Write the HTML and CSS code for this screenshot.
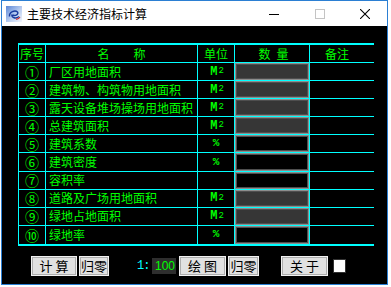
FILE: index.html
```html
<!DOCTYPE html>
<html lang="zh">
<head>
<meta charset="utf-8">
<title>主要技术经济指标计算</title>
<link rel="stylesheet" href="styles.css">
</head>
<body>
<div class="window">
  <div class="titlebar">
    <svg class="app-icon" viewBox="0 0 16 16" width="16" height="16">
      <defs>
        <linearGradient id="ig" x1="0" y1="0" x2="1" y2="1">
          <stop offset="0" stop-color="#5b86d6"/>
          <stop offset="0.55" stop-color="#b9cdf0"/>
          <stop offset="1" stop-color="#f4f7fd"/>
        </linearGradient>
      </defs>
      <rect x="0" y="0" width="16" height="16" fill="url(#ig)"/>
      <path d="M3.5 10.5 C3 6, 9 3.5, 11.5 6 C13 8, 9.5 10.5, 6.5 9 M6 8.5 C 5 12, 10 13, 13 10.5" fill="none" stroke="#1a3a9e" stroke-width="1.4"/>
      <path d="M10 13 C11.5 13.5, 13 12.5, 14 11" fill="none" stroke="#d02020" stroke-width="1.2"/>
    </svg>
    <span class="title">主要技术经济指标计算</span>
    <div class="controls">
      <div class="ctl"><svg width="10" height="10" viewBox="0 0 10 10"><path d="M0 5.5 H10" stroke="#000" stroke-width="1"/></svg></div>
      <div class="ctl"><svg width="10" height="10" viewBox="0 0 10 10"><rect x="0.5" y="0.5" width="9" height="9" fill="none" stroke="#c4c4c4" stroke-width="1"/></svg></div>
      <div class="ctl close"><svg width="10" height="10" viewBox="0 0 10 10"><path d="M0 0 L10 10 M10 0 L0 10" stroke="#000" stroke-width="1.1"/></svg></div>
    </div>
  </div>
  <div class="client">
    <div class="table">
      <div class="row head">
        <div class="cell c-center">序号</div>
        <div class="cell c-name-h"><span>名</span><span>称</span></div>
        <div class="cell c-center">单位</div>
        <div class="cell c-qty-h">数量</div>
        <div class="cell c-note-h">备注</div>
      </div>
      <div class="row">
        <div class="cell c-no">①</div>
        <div class="cell c-name">厂区用地面积</div>
        <div class="cell c-center unit">M<sup>2</sup></div>
        <div class="cell c-field"><div class="field filled"></div></div>
        <div class="cell"></div>
      </div>
      <div class="row">
        <div class="cell c-no">②</div>
        <div class="cell c-name">建筑物、构筑物用地面积</div>
        <div class="cell c-center unit">M<sup>2</sup></div>
        <div class="cell c-field"><div class="field filled"></div></div>
        <div class="cell"></div>
      </div>
      <div class="row">
        <div class="cell c-no">③</div>
        <div class="cell c-name">露天设备堆场操场用地面积</div>
        <div class="cell c-center unit">M<sup>2</sup></div>
        <div class="cell c-field"><div class="field filled"></div></div>
        <div class="cell"></div>
      </div>
      <div class="row">
        <div class="cell c-no">④</div>
        <div class="cell c-name">总建筑面积</div>
        <div class="cell c-center unit">M<sup>2</sup></div>
        <div class="cell c-field"><div class="field filled"></div></div>
        <div class="cell"></div>
      </div>
      <div class="row">
        <div class="cell c-no">⑤</div>
        <div class="cell c-name">建筑系数</div>
        <div class="cell c-center unit pct">%</div>
        <div class="cell c-field"><div class="field"></div></div>
        <div class="cell"></div>
      </div>
      <div class="row">
        <div class="cell c-no">⑥</div>
        <div class="cell c-name">建筑密度</div>
        <div class="cell c-center unit pct">%</div>
        <div class="cell c-field"><div class="field"></div></div>
        <div class="cell"></div>
      </div>
      <div class="row">
        <div class="cell c-no">⑦</div>
        <div class="cell c-name">容积率</div>
        <div class="cell c-center unit"></div>
        <div class="cell c-field"><div class="field"></div></div>
        <div class="cell"></div>
      </div>
      <div class="row">
        <div class="cell c-no">⑧</div>
        <div class="cell c-name">道路及广场用地面积</div>
        <div class="cell c-center unit">M<sup>2</sup></div>
        <div class="cell c-field"><div class="field filled"></div></div>
        <div class="cell"></div>
      </div>
      <div class="row">
        <div class="cell c-no">⑨</div>
        <div class="cell c-name">绿地占地面积</div>
        <div class="cell c-center unit">M<sup>2</sup></div>
        <div class="cell c-field"><div class="field filled"></div></div>
        <div class="cell"></div>
      </div>
      <div class="row">
        <div class="cell c-no">⑩</div>
        <div class="cell c-name">绿地率</div>
        <div class="cell c-center unit pct">%</div>
        <div class="cell c-field"><div class="field"></div></div>
        <div class="cell"></div>
      </div>
    </div>
    <div class="toolbar">
      <div class="btn w46">计 算</div>
      <div class="btn w30 gap2">归零</div>
      <div class="scale-label">1:</div>
      <div class="scale-value">100</div>
      <div class="btn w47 gap3">绘 图</div>
      <div class="btn w31 gap2">归零</div>
      <div class="btn w47 gap22">关 于</div>
      <div class="check"></div>
    </div>
  </div>
</div>
</body>
</html>
```
FILE: styles.css
```css
html, body {
  margin: 0;
  padding: 0;
}
body {
  background: #ffffff;
  width: 391px;
  height: 287px;
  overflow: hidden;
  font-family: "Noto Sans CJK SC", "Noto Sans", sans-serif;
}
.window {
  margin-left: 1px;
  width: 387px;
  height: 285px;
  box-sizing: border-box;
  border: 1px solid #2b7fd3;
  display: flex;
  flex-direction: column;
}
.titlebar {
  height: 25px;
  flex: none;
  background: #fff;
  display: flex;
  align-items: center;
}
.app-icon {
  display: block;
  margin-left: 4px;
  flex: none;
}
.title {
  margin-left: 5px;
  font-size: 12px;
  color: #000;
  line-height: 1;
}
.controls {
  margin-left: auto;
  display: flex;
  height: 25px;
}
.ctl {
  width: 46px;
  height: 25px;
  display: flex;
  align-items: center;
  justify-content: center;
}
.ctl svg { display: block; }
.ctl.close { width: 44px; }

.client {
  flex: 1;
  background: #000;
  padding: 17px 0 0 16px;
}
.table {
  width: 356px;
  box-sizing: border-box;
  border-top: 2px solid #00ffff;
  border-bottom: 2px solid #00ffff;
  border-left: 1px solid #00ffff;
}
.row {
  display: grid;
  grid-template-columns: 26px 152px 37px 75px 65px;
  height: 18.1px;
  box-sizing: border-box;
  border-bottom: 1px solid #00ffff;
}
.row.head { height: 18px; }
.row:last-child { border-bottom: none; }
.cell {
  box-sizing: border-box;
  display: flex;
  align-items: center;
  color: #00ff00;
  font-size: 12px;
  line-height: 1;
  white-space: nowrap;
  overflow: hidden;
}
.cell + .cell { border-left: 1px solid #00ffff; }
.c-no { justify-content: center; font-size: 14px; }
.c-center { justify-content: center; }
.c-name { padding-left: 3px; }
.c-name-h { justify-content: center; gap: 24px; }
.c-qty-h { justify-content: center; letter-spacing: 6px; padding-left: 9px; }
.c-note-h { justify-content: center; padding-right: 10px; }
.unit {
  font-family: "Liberation Mono", "DejaVu Sans Mono", monospace;
  font-weight: bold;
  font-size: 12px;
  padding-left: 2px;
}
.unit sup {
  font-size: 9px;
  font-weight: normal;
  vertical-align: 3px;
  margin-left: 1px;
}
.unit.pct { font-size: 11px; padding-left: 0; }
.c-field { align-items: stretch; }
.field {
  flex: 1;
  box-sizing: border-box;
  border: 1px solid #8c8c8c;
  box-shadow: inset 0 0 0 1px #4e4e4e;
  background: #000;
}
.field.filled { background: #363636; }

.toolbar {
  display: flex;
  align-items: center;
  height: 20px;
  margin-top: 10px;
  padding-left: 13px;
}
.btn {
  height: 20px;
  box-sizing: border-box;
  background: #e1e1e1;
  border: 1px solid #f2f2f2;
  box-shadow: inset 0 0 0 1px #adadad;
  color: #000;
  font-size: 13px;
  line-height: 1;
  display: flex;
  align-items: center;
  justify-content: center;
  white-space: pre;
}
.w46 { width: 46px; }
.w30 { width: 30px; }
.w47 { width: 47px; }
.w31 { width: 31px; }
.gap2 { margin-left: 2px; }
.gap3 { margin-left: 3px; }
.gap22 { margin-left: 22px; }
.scale-label {
  margin-left: 28px;
  width: 15px;
  color: #00ffff;
  font-family: "Liberation Mono", "DejaVu Sans Mono", monospace;
  font-size: 12px;
  letter-spacing: -1px;
}
.scale-value {
  width: 24px;
  height: 16px;
  box-sizing: border-box;
  background: #2e2e2e;
  color: #00ff00;
  font-family: "Liberation Sans", sans-serif;
  font-size: 12px;
  line-height: 16px;
  padding-left: 3px;
}
.check {
  margin-left: 5px;
  width: 13px;
  height: 14px;
  box-sizing: border-box;
  background: #fff;
  border: 1px solid #333;
}
```
